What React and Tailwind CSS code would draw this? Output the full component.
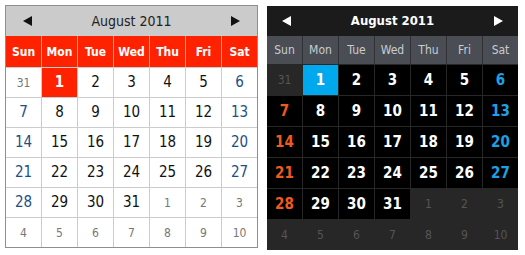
const days = ["Sun", "Mon", "Tue", "Wed", "Thu", "Fri", "Sat"]

// 6 weeks shown for August 2011, starting Sunday July 31
const cells = (() => {
  const out = [{ n: 31, other: true }]
  for (let d = 1; d <= 31; d++) out.push({ n: d, other: false })
  let d = 1
  while (out.length < 42) out.push({ n: d++, other: true })
  return out
})()

const font = { fontFamily: '"DejaVu Sans Condensed", "DejaVu Sans", sans-serif' }

const Tri = ({ dir, color }) => (
  <svg width="10" height="10" viewBox="0 0 10 10">
    {dir === "left" ? <polygon points="9,0 9,10 0,5" fill={color} /> : <polygon points="1,0 1,10 10,5" fill={color} />}
  </svg>
)

const LightCalendar = () => (
  <div className="w-[253px] border border-[#8f8f8f] bg-white" style={font}>
    <div className="h-[30px] bg-[#cbcbcb] flex items-center justify-between px-[17px]">
      <Tri dir="left" color="#111" />
      <span className="text-[14px] text-[#222]">August 2011</span>
      <Tri dir="right" color="#111" />
    </div>
    <div className="grid grid-cols-7 gap-px bg-[#f7a08f]">
      {days.map((d) => (
        <div key={d} className="h-[31px] bg-[#ff2200] flex items-center justify-center text-white text-[12px] font-bold">
          {d}
        </div>
      ))}
    </div>
    <div className="grid grid-cols-7 gap-px bg-[#cccccc] border-t border-[#cccccc]">
      {cells.map((c, i) => {
        const col = i % 7
        const today = !c.other && c.n === 1
        let cls = "text-[15px] text-[#111]"
        if (c.other) cls = "text-[12px] text-[#777]"
        else if (today) cls = "text-[15px] text-white font-bold bg-[#ff2200]"
        else if (col === 0 || col === 6) cls = "text-[15px] text-[#1d4f85]"
        return (
          <div key={i} className={`h-[29px] flex items-center justify-center ${today ? "" : "bg-white"} ${cls}`}>
            {c.n}
          </div>
        )
      })}
    </div>
  </div>
)

const DarkCalendar = () => (
  <div className="w-[251px] bg-[#272727]" style={font}>
    <div className="h-[30px] bg-[#1b1b1b] flex items-center justify-between px-[15px]">
      <Tri dir="left" color="#fff" />
      <span className="text-[13px] text-white font-bold">August 2011</span>
      <Tri dir="right" color="#fff" />
    </div>
    <div className="grid grid-cols-7 gap-px bg-[#2f3134] mb-px">
      {days.map((d) => (
        <div key={d} className="h-[28px] bg-[#4a4e54] flex items-center justify-center text-[#c9ccd0] text-[12px]">
          {d}
        </div>
      ))}
    </div>
    <div className="grid grid-cols-7 gap-px">
      {cells.map((c, i) => {
        const col = i % 7
        const today = !c.other && c.n === 1
        let cls = "bg-black text-white font-bold text-[15px]"
        if (c.other) cls = "text-[12px] text-[#555]"
        else if (today) cls = "bg-[#00a8ee] text-white font-bold text-[15px]"
        else if (col === 0) cls = "bg-black text-[#f05a1c] font-bold text-[15px]"
        else if (col === 6) cls = "bg-black text-[#1aa3e6] font-bold text-[15px]"
        return (
          <div key={i} className={`h-[30px] flex items-center justify-center ${cls}`}>
            {c.n}
          </div>
        )
      })}
    </div>
  </div>
)

export default function App() {
  return (
    <div className="w-[525px] h-[255px] bg-white flex items-start gap-[9px] pl-[5px] pt-[5px]">
      <LightCalendar />
      <div className="pt-px">
        <DarkCalendar />
      </div>
    </div>
  )
}
